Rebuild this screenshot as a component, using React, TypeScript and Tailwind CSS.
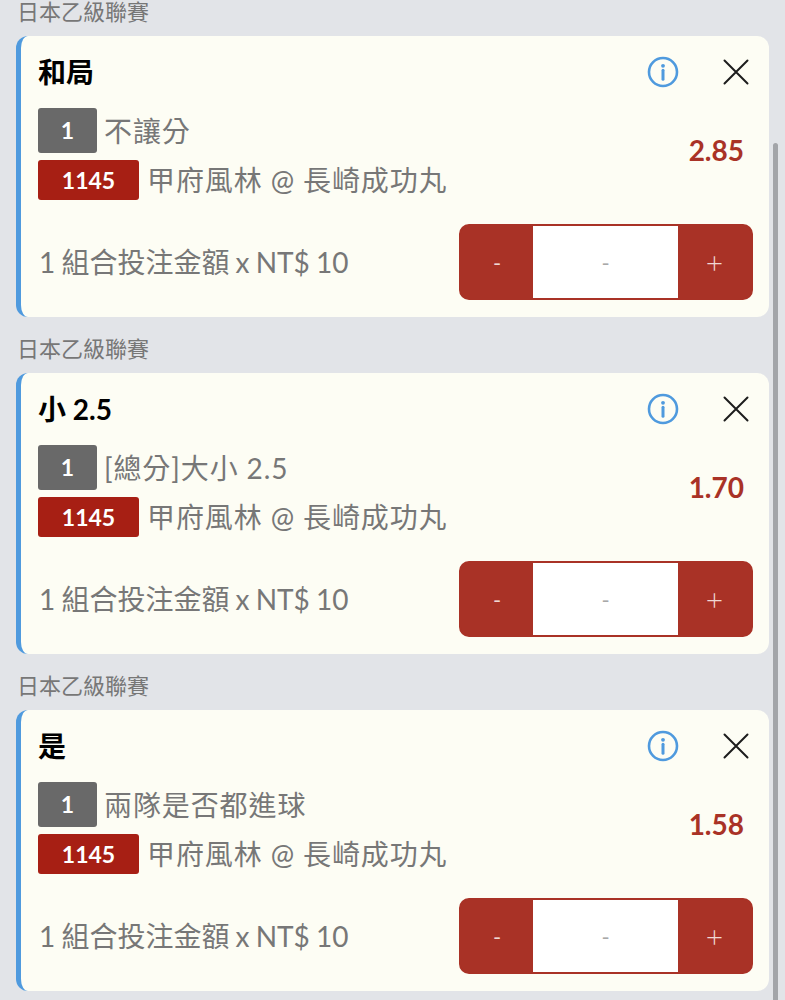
const BETS = [
  { title: "和局", market: "不讓分", odds: "2.85" },
  { title: "小 2.5", market: "[總分]大小 2.5", odds: "1.70" },
  { title: "是", market: "兩隊是否都進球", odds: "1.58" },
];

const FONT = "font-['Lato','Noto_Sans_CJK_TC',sans-serif]";

function InfoIcon() {
  return (
    <svg width="32" height="32" viewBox="0 0 32 32" fill="none" className="text-[#4f9ade]">
      <circle cx="16" cy="16" r="14" stroke="currentColor" strokeWidth="2.6" />
      <circle cx="16" cy="9.8" r="1.9" fill="currentColor" />
      <path d="M16 14.2v9" stroke="currentColor" strokeWidth="3" strokeLinecap="round" />
    </svg>
  );
}

function CloseIcon() {
  return (
    <svg width="26" height="26" viewBox="0 0 26 26" fill="none" className="text-[#1c1c1c]">
      <path d="M1.5 1.5l23 23M24.5 1.5l-23 23" stroke="currentColor" strokeWidth="2" strokeLinecap="round" />
    </svg>
  );
}

function BetCard({ title, market, odds }: { title: string; market: string; odds: string }) {
  return (
    <div className="mx-4 flex h-[281px] w-[753px] flex-col rounded-xl border-l-[5px] border-[#4f9ade] bg-[#fdfdf4] pl-[17px] pr-4">
      <div className="flex h-[72px] items-center justify-between">
        <h2 className="-mt-[1px] text-[28px] leading-none font-bold text-black">{title}</h2>
        <div className="flex items-center gap-[44px] pr-1">
          <InfoIcon />
          <CloseIcon />
        </div>
      </div>

      <div className="flex items-center justify-between pr-[9px]">
        <div className="flex flex-col gap-[7px]">
          <div className="flex items-center gap-[7px]">
            <span className="flex h-[45px] w-[59px] items-center justify-center rounded-[3px] bg-[#696969] text-[23px] font-bold text-white">1</span>
            <span className="text-[28px] leading-none tracking-[0.9px] text-[#777777]">{market}</span>
          </div>
          <div className="flex items-center gap-[8px]">
            <span className="flex h-10 w-[101px] items-center justify-center rounded-[3px] bg-[#a71f14] text-[23px] font-bold text-white">1145</span>
            <span className="text-[28px] leading-none tracking-[0.9px] text-[#777777]">甲府風林 @ 長崎成功丸</span>
          </div>
        </div>
        <span className="-mt-[9px] text-[28px] leading-none font-bold text-[#a93226]">{odds}</span>
      </div>

      <div className="mt-[24px] flex items-center justify-between">
        <span className="pl-[1px] text-[28px] leading-none [word-spacing:-1px] text-[#777777]">1 組合投注金額 x NT$ 10</span>
        <div className="flex h-[76px] w-[294px] overflow-hidden rounded-[10px] border-2 border-[#a93226] bg-[#a93226]">
          <button className="flex w-[72px] items-center justify-center text-[22px] text-[#f0d8d4]">-</button>
          <div className="flex w-[145px] items-center justify-center bg-white text-[22px] text-[#a8a8a8]">-</div>
          <button className="flex flex-1 items-center justify-center text-[30px] font-light text-[#f0d8d4]">+</button>
        </div>
      </div>
    </div>
  );
}

export default function App() {
  return (
    <div className={`relative h-[1000px] w-[785px] overflow-hidden bg-[#e2e4e8] ${FONT}`}>
      <div className="mt-[-20px] flex flex-col">
        {BETS.map((bet) => (
          <div key={bet.title}>
            <div className="h-[56px] pl-[17px] pt-[19px] text-[22px] leading-[26px] text-[#777777]">日本乙級聯賽</div>
            <BetCard {...bet} />
          </div>
        ))}
      </div>
      {/* scrollbar thumb */}
      <div className="absolute top-[143px] right-[7px] bottom-0 w-[5px] rounded-t-full bg-[#a3a5a9]" />
    </div>
  );
}
